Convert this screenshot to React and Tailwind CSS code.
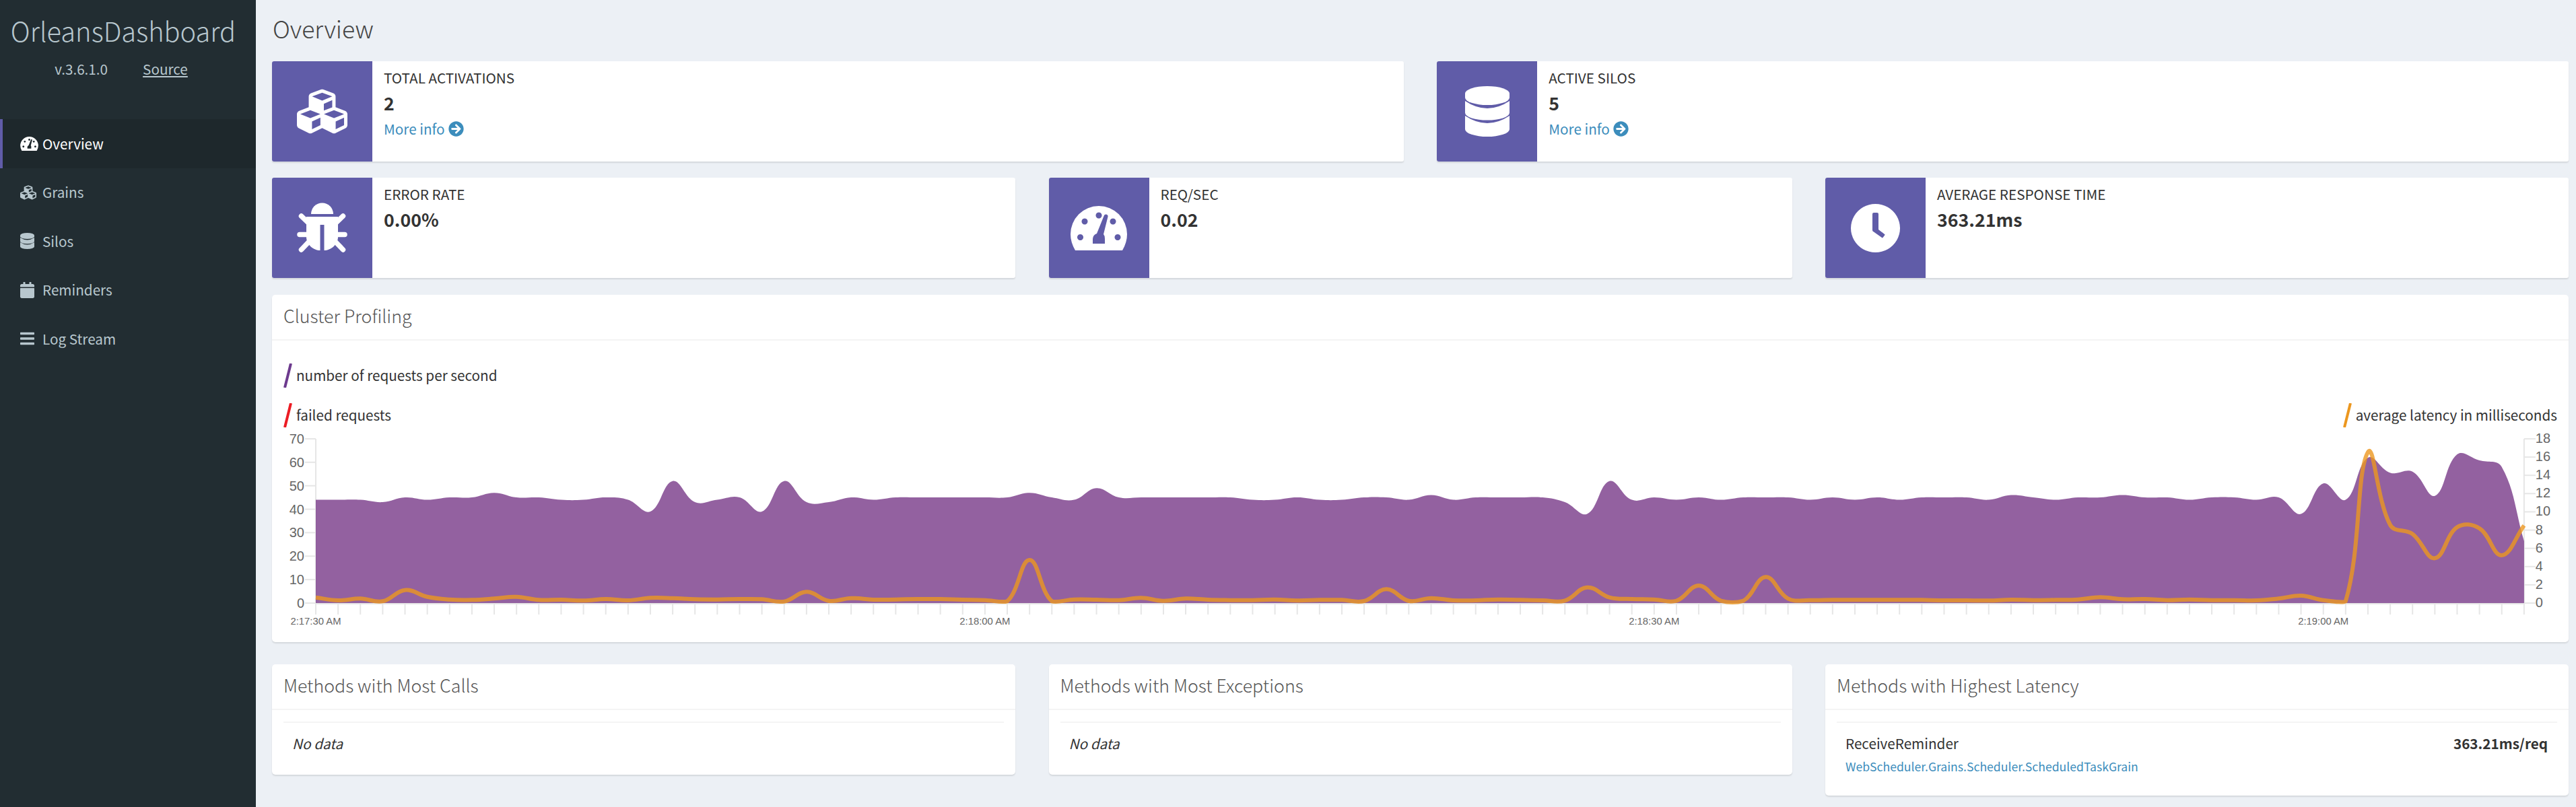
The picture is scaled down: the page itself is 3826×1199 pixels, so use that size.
import React from "react";
import { FaCubes, FaCalendar, FaBars, FaArrowCircleRight } from "react-icons/fa";

const purple = [44,44,44,43,45,44,45,45,47,45,45,44,44,45,44,39,52,43,44,45,39,52,43,43,45,44,45,45,45,45,45,45,47,45,44,49,45,45,45,45,45,45,44,44,45,44,44,45,45,44,46,44,45,45,45,45,43,38,52,44,45,44,45,44,45,45,45,44,45,44,45,44,45,45,45,44,46,45,44,45,45,46,45,45,44,45,45,44,45,38,51,44,62,55.5,56,45.7,63.4,60.8,58,26.4];
const orange = [25,12,20,8,58,28,16,14,20,28,14,15,11,18,12,23,22,17,16,18,17,7,50,10,22,15,16,18,18,15,13,8,192,8,16,15,13,23,10,20,15,13,13,16,11,14,14,9,62,10,22,12,12,16,14,12,11,70,25,18,16,10,78,10,10,116,20,13,14,14,14,14,14,12,12,11,15,13,14,16,26,17,18,13,16,13,13,12,20,33,13,8,673,348,308,200,338,333,213,346];

const X0 = 469 - 404;
const DX = 33.13;
const BASE = 896 - 640;

function smooth(ys) {
  const pts = ys.map((y, i) => [X0 + i * DX, y]);
  const t = 0.4;
  const ctrl = pts.map((p, i) => {
    const a = pts[Math.max(i - 1, 0)];
    const b = pts[Math.min(i + 1, pts.length - 1)];
    const d01 = Math.hypot(p[0] - a[0], p[1] - a[1]);
    const d12 = Math.hypot(b[0] - p[0], b[1] - p[1]);
    const sum = d01 + d12 || 1;
    const fa = (t * d01) / sum;
    const fb = (t * d12) / sum;
    const clampY = (y) => Math.max(12, Math.min(BASE, y));
    return {
      prev: [p[0] - fa * (b[0] - a[0]), clampY(p[1] - fa * (b[1] - a[1]))],
      next: [p[0] + fb * (b[0] - a[0]), clampY(p[1] + fb * (b[1] - a[1]))],
    };
  });
  let d = `M${pts[0][0]} ${pts[0][1]}`;
  for (let i = 0; i < pts.length - 1; i++) {
    const c1 = ctrl[i].next;
    const c2 = ctrl[i + 1].prev;
    const p = pts[i + 1];
    d += ` C${c1[0].toFixed(1)} ${c1[1].toFixed(1)} ${c2[0].toFixed(1)} ${c2[1].toFixed(1)} ${p[0].toFixed(1)} ${p[1].toFixed(1)}`;
  }
  return d;
}

function Gauge({ className }) {
  return (
    <svg viewBox="0 0 84 66" className={className} fill="currentColor">
      <path
        fillRule="evenodd"
        d="M7 66H77Q84 54 84 42A42 42 0 0 0 0 42Q0 54 7 66Z M42 9.5a4.5 4.5 0 1 0 .01 0Z M21 18.5a4.5 4.5 0 1 0 .01 0Z M63 18.5a4.5 4.5 0 1 0 .01 0Z M14.5 42a4.5 4.5 0 1 0 .01 0Z M70 42a4.5 4.5 0 1 0 .01 0Z M33 49A9 9 0 0 1 39 41L49.5 15A3 3 0 0 1 55.500 16L49 42A9 9 0 0 1 51 49V56H33Z"
      />
    </svg>
  );
}

function Bug({ className }) {
  return (
    <svg viewBox="0 0 75 75" className={className} fill="currentColor">
      <path d="M21 17A16.500 16.500 0 0 1 54 17Z" />
      <path
        fillRule="evenodd"
        d="M14 21H61V51C61 63 50 71 40.500 71V33H34.500V71C25 71 14 63 14 51Z"
      />
      <g stroke="currentColor" strokeWidth="7.5" strokeLinecap="round" fill="none">
        <path d="M6.500 20L18 31" />
        <path d="M68.500 20L57 31" />
        <path d="M4 47.500H18" />
        <path d="M71 47.500H57" />
        <path d="M6.500 70L17 59" />
        <path d="M68.500 70L58 59" />
      </g>
    </svg>
  );
}

function Clock({ className }) {
  return (
    <svg viewBox="0 0 73 72" className={className} fill="currentColor">
      <path
        fillRule="evenodd"
        d="M36.500 0A36.500 36 0 1 0 36.501 0Z M34 13H39A2 2 0 0 1 41 15V38L50 45A1 1 0 0 1 50.200 46.500L47.500 50A1 1 0 0 1 46 50L34 41.500A2.500 2.500 0 0 1 32 39V15A2 2 0 0 1 34 13Z"
      />
    </svg>
  );
}

function Db({ className }) {
  return (
    <svg viewBox="0 0 66 75" className={className} fill="currentColor">
      <path d="M0 11A33 11 0 0 1 66 11V17A33 11 0 0 1 0 17Z" />
      <path d="M0 22Q33 44 66 22V39.600A33 11 0 0 1 0 39.600Z" />
      <path d="M0 44Q33 66 66 44V64A33 11 0 0 1 0 64Z" />
    </svg>
  );
}

function InfoCard({ icon, title, value, more }) {
  return (
    <div className="flex h-[149px] rounded-[3px] bg-white shadow-[0_2px_2px_rgba(0,0,0,0.1)]">
      <div className="flex w-[149px] shrink-0 items-center justify-center rounded-l-[3px] bg-[#605ca8] text-white">{icon}</div>
      <div className="pl-[17px] pt-2 text-[#333]">
        <div className="h-[33px] text-[20.7px] leading-[33px] uppercase">{title}</div>
        <div className="h-[42px] text-[26.7px] font-bold leading-[42px]">{value}</div>
        {more && (
          <div className="flex h-[34px] items-center gap-[5px] text-[20.7px] leading-[34px] text-[#3c8dbc]">
            More info <FaArrowCircleRight className="h-[23px] w-[23px]" />
          </div>
        )}
      </div>
    </div>
  );
}

function NavItem({ icon, label, active }) {
  return (
    <div className={active
      ? "flex h-[72.5px] items-center border-l-[4px] border-[#605ca8] bg-[#1e282c] pl-[25.500px] text-[20.7px] text-white"
      : "flex h-[72.5px] items-center border-l-[4px] border-transparent pl-[25.500px] text-[20.7px] text-[#b8c7ce]"}>
      <span className="flex w-[33.500px] shrink-0 items-center">{icon}</span>
      {label}
    </div>
  );
}

function Slash({ color }) {
  return (
    <svg viewBox="0 0 13 36" className="h-9 w-[13px] shrink-0">
      <path d="M11 0L2 36" stroke={color} strokeWidth="4" fill="none" />
    </svg>
  );
}

function Chart() {
  const py = purple.map((v) => BASE - v * 3.486);
  const oy = orange.map((v) => BASE - v / 3);
  const xEnd = X0 + 99 * DX;
  const left = [70, 60, 50, 40, 30, 20, 10, 0];
  const right = [18, 16, 14, 12, 10, 8, 6, 4, 2, 0];
  const times = [["2:17:30 AM", 0], ["2:18:00 AM", 30], ["2:18:30 AM", 60], ["2:19:00 AM", 90]];
  const area = smooth(py) + ` L${xEnd} ${BASE} L${X0} ${BASE} Z`;
  return (
    <svg width="3411" height="300" className="block">
      <g stroke="#e6e6e6" strokeWidth="2" fill="none">
        <path d={`M${X0} 12V${BASE}`} />
        <path d={`M${xEnd} 12V${BASE}`} />
        <path d={`M${X0} ${BASE + 1}H${xEnd}`} />
        {Array.from({ length: 100 }, (_, i) => (
          <path key={i} d={`M${X0 + i * DX} ${BASE}V${BASE + 17}`} />
        ))}
        {left.map((v) => (
          <path key={v} d={`M${X0 - 16} ${BASE - v * 3.486}H${X0}`} />
        ))}
        {right.map((v) => (
          <path key={v} d={`M${xEnd} ${BASE - v * 13.556}H${xEnd + 17}`} />
        ))}
      </g>
      <path d={area} fill="rgba(120,57,136,0.8)" />
      <path d={smooth(oy)} fill="none" stroke="rgba(236,151,31,0.8)" strokeWidth="6" />
      <g fill="#666" fontSize="20" fontFamily="Liberation Sans, sans-serif">
        {left.map((v) => (
          <text key={v} x={X0 - 17} y={BASE - v * 3.486 + 7} textAnchor="end">{v}</text>
        ))}
        {right.map((v) => (
          <text key={v} x={xEnd + 17} y={BASE - v * 13.556 + 6}>{v}</text>
        ))}
      </g>
      <g fill="#666" fontSize="14.850" fontFamily="Liberation Sans, sans-serif" textAnchor="middle">
        {times.map(([t, i]) => (
          <text key={t} x={X0 + i * DX} y={BASE + 32}>{t}</text>
        ))}
      </g>
    </svg>
  );
}

function Panel({ title, children }) {
  return (
    <div className="rounded-[5px] bg-white shadow-[0_2px_2px_rgba(0,0,0,0.1)]">
      <div className="h-[68px] border-b-2 border-[#f4f4f4] pl-[17px] font-['Noto_Sans_CJK_SC_Light','Noto_Sans_CJK_SC',sans-serif] text-[26.7px] font-light leading-[62px] text-[#555]">{title}</div>
      {children}
    </div>
  );
}

export default function App() {
  return (
    <div className="flex min-h-[1199px] bg-[#ecf0f5] font-['Noto_Sans_CJK_SC',sans-serif] text-[#333]">
      <aside className="w-[380px] shrink-0 bg-[#222d32] text-[#b8c7ce]">
        <div className="h-[177px] text-center">
          <div className="pr-[14px] pt-[16px] font-['Noto_Sans_CJK_SC_Light','Noto_Sans_CJK_SC',sans-serif] text-[39.800px] font-light leading-[58px]">OrleansDashboard</div>
          <div className="flex justify-center gap-[52px] pr-[20px] pt-[11px] text-[20.7px] leading-[34px]">
            <span>v.3.6.1.0</span>
            <span className="underline">Source</span>
          </div>
        </div>
        <nav>
          <NavItem active label="Overview" icon={<Gauge className="h-[21px] w-[27px]" />} />
          <NavItem label="Grains" icon={<FaCubes className="h-[24px] w-[24px]" />} />
          <NavItem label="Silos" icon={<Db className="h-[24px] w-[21px]" />} />
          <NavItem label="Reminders" icon={<FaCalendar className="h-[24px] w-[21px]" />} />
          <NavItem label="Log Stream" icon={<FaBars className="h-[24px] w-[21px]" />} />
        </nav>
      </aside>
      <main className="min-w-0 flex-1 pl-6 pr-[11px]">
        <h1 className="h-[91px] pl-[1px] pt-[16px] font-['Noto_Sans_CJK_SC_Light','Noto_Sans_CJK_SC',sans-serif] text-[35.6px] font-light leading-[52px] text-[#444]">Overview</h1>
        <div className="grid grid-cols-2 gap-x-[49.5px]">
          <InfoCard icon={<FaCubes className="h-[75px] w-[75px]" />} title="Total Activations" value="2" more />
          <InfoCard icon={<Db className="h-[75px] w-[66px]" />} title="Active Silos" value="5" more />
        </div>
        <div className="mt-6 grid grid-cols-3 gap-x-[49.5px]">
          <InfoCard icon={<Bug className="h-[75px] w-[75px]" />} title="Error Rate" value="0.00%" />
          <InfoCard icon={<Gauge className="h-[66px] w-[84px]" />} title="Req/Sec" value="0.02" />
          <InfoCard icon={<Clock className="h-[72px] w-[73px]" />} title="Average Response Time" value="363.21ms" />
        </div>
        <div className="mt-[25px]">
          <Panel title="Cluster Profiling">
            <div className="pt-[34px] pb-[14px]">
              <div className="flex h-9 items-center gap-[6px] pl-[17px] text-[20.7px]">
                <Slash color="#6d3a8e" />
                <span>number of requests per second</span>
              </div>
              <div className="mt-[23px] flex h-9 items-center justify-between pl-[17px] pr-[17px] text-[20.7px]">
                <div className="flex items-center gap-[6px]">
                  <Slash color="#ec1c24" />
                  <span>failed requests</span>
                </div>
                <div className="flex items-center gap-[6px]">
                  <Slash color="#ec971f" />
                  <span>average latency in milliseconds</span>
                </div>
              </div>
              <div className="mt-[5px]">
                <Chart />
              </div>
            </div>
          </Panel>
        </div>
        <div className="mt-[33px] grid grid-cols-3 items-start gap-x-[49.5px]">
          <Panel title="Methods with Most Calls">
            <div className="px-[17px] pt-[17px] pb-[30px]">
              <div className="h-[2px] bg-[#f4f4f4]" />
              <div className="pl-[13px] pt-[13px] text-[20.7px] italic leading-[34px]">No data</div>
            </div>
          </Panel>
          <Panel title="Methods with Most Exceptions">
            <div className="px-[17px] pt-[17px] pb-[30px]">
              <div className="h-[2px] bg-[#f4f4f4]" />
              <div className="pl-[13px] pt-[13px] text-[20.7px] italic leading-[34px]">No data</div>
            </div>
          </Panel>
          <Panel title="Methods with Highest Latency">
            <div className="px-[17px] pt-[17px] pb-[28px]">
              <div className="h-[2px] bg-[#f4f4f4]" />
              <div className="flex justify-between pl-[13px] pr-[14px] pt-[13px] text-[20.7px] leading-[34px]">
                <span>ReceiveReminder</span>
                <span className="font-bold">363.21ms/req</span>
              </div>
              <div className="pl-[13px] pt-[3px] text-[17.6px] leading-[30px] text-[#3c8dbc]">WebScheduler.Grains.Scheduler.ScheduledTaskGrain</div>
            </div>
          </Panel>
        </div>
      </main>
    </div>
  );
}
